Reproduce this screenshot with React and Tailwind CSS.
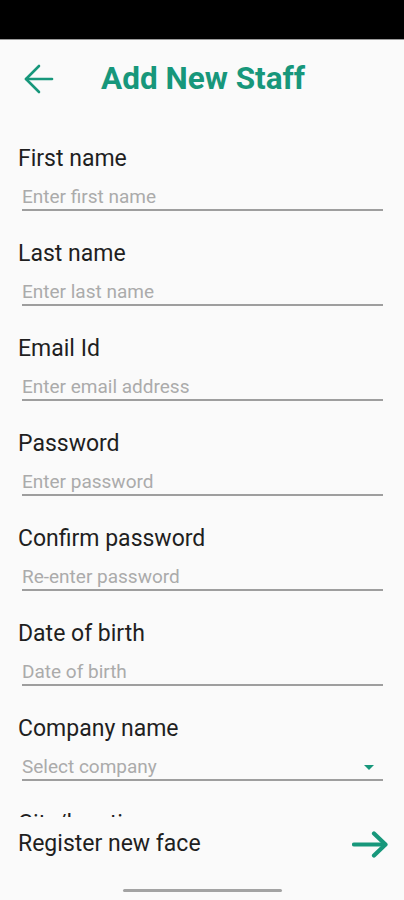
export default function App() {
  const fields = [
    { label: 'First name', placeholder: 'Enter first name' },
    { label: 'Last name', placeholder: 'Enter last name' },
    { label: 'Email Id', placeholder: 'Enter email address' },
    { label: 'Password', placeholder: 'Enter password' },
    { label: 'Confirm password', placeholder: 'Re-enter password' },
    { label: 'Date of birth', placeholder: 'Date of birth' },
    { label: 'Company name', placeholder: 'Select company', select: true },
    { label: 'City/location', placeholder: 'Select city' },
  ]

  return (
    <div className="w-[404px] h-[900px] flex flex-col bg-[#fafafa] overflow-hidden" style={{ fontFamily: 'Roboto, "Noto Sans", sans-serif' }}>
      {/* status bar */}
      <div className="h-[39px] bg-black shrink-0" />
      <div className="h-px bg-[#9a9a9a] shrink-0" />

      <div className="h-[777px] overflow-hidden shrink-0">
        <header className="h-[78px] flex items-center">
          <svg className="ml-[24px]" width="30" height="30" viewBox="0 0 30 30" fill="none" stroke="#17977b" strokeWidth="2.6" strokeLinecap="round" strokeLinejoin="round">
            <path d="M28 15H2" />
            <path d="M15 2L2 15l13 13" />
          </svg>
          <h1 className="ml-[47px] text-[31.5px] font-bold text-[#17977b] leading-none">Add New Staff</h1>
        </header>

        <div className="pt-[27px]">
          {fields.map((f) => (
            <div key={f.label} className="mb-[29px]">
              <div className="pl-[18px] h-[28px] leading-[28px] text-[23px] text-[#1f1f1f]">{f.label}</div>
              <div className="mt-[12px] ml-[22px] mr-[21px] border-b-2 border-[#9e9e9e] flex items-center">
                <span className="flex-1 h-[24px] leading-[24px] text-[19px] text-[#ababab]">{f.placeholder}</span>
                {f.select && (
                  <svg className="mr-[9px]" width="10" height="5" viewBox="0 0 10 5">
                    <path d="M0 0h10L5 5z" fill="#17977b" />
                  </svg>
                )}
              </div>
            </div>
          ))}
        </div>
      </div>

      <div className="flex-1 flex flex-col">
        <div className="flex items-center justify-between h-[48px] mt-[3px] pl-[18px] pr-[16px]">
          <span className="text-[23px] text-[#1f1f1f]">Register new face</span>
          <svg width="36" height="27" viewBox="0 0 36 27" fill="none" stroke="#17977b" strokeWidth="4.2" strokeLinecap="round" strokeLinejoin="round">
            <path d="M2 13.5h31" />
            <path d="M22 2.5l11.5 11-11.5 11" />
          </svg>
        </div>
        <div className="flex-1 flex items-end justify-center pb-[8px]">
          <div className="w-[159px] h-[3px] rounded-full bg-[#a3a3a3]" />
        </div>
      </div>
    </div>
  )
}
